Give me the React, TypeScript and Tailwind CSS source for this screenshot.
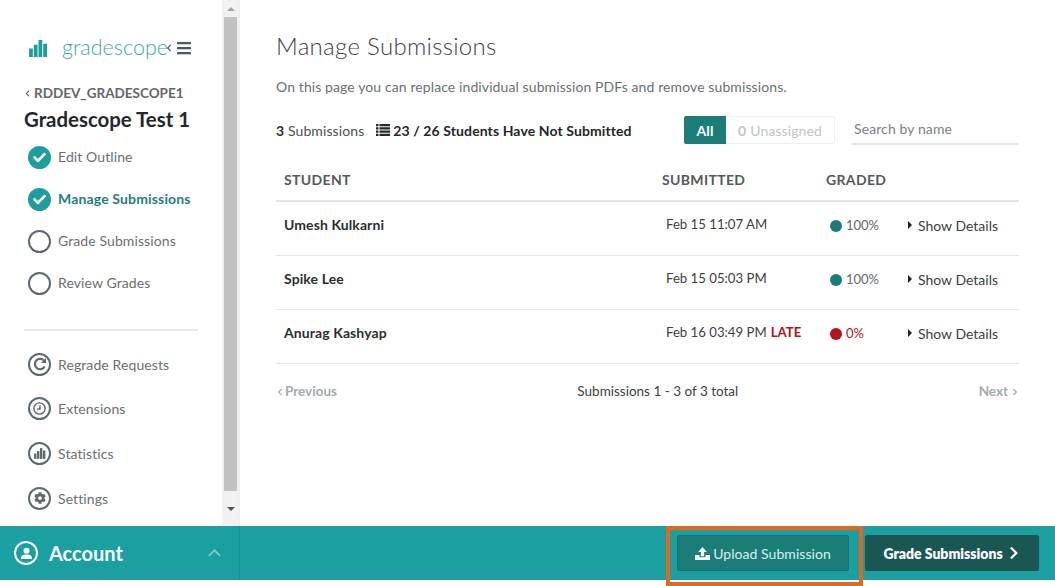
import React from "react";
import { FaBars, FaCheck, FaChevronRight, FaCog, FaChevronLeft } from "react-icons/fa";

const font = "font-['Lato','Open_Sans',sans-serif]";

const BarsIcon = ({ className }: { className: string }) => (
  <svg viewBox="0 0 20 18" className={className} fill="currentColor">
    <rect x="0" y="9" width="4" height="9" />
    <rect x="5" y="5" width="4" height="13" />
    <rect x="10" y="0" width="4" height="18" />
    <rect x="15" y="4" width="4" height="14" />
  </svg>
);

const ListIcon = () => (
  <svg viewBox="0 0 14 12" className="ml-3 w-[14px] h-[12px] text-[#22282c]" fill="currentColor">
    <path d="M0 0h2.5v2.2H0zM3.5 0H14v2.2H3.5zM0 3.3h2.5v2.2H0zM3.5 3.3H14v2.2H3.5zM0 6.6h2.5v2.2H0zM3.5 6.6H14v2.2H3.5zM0 9.8h2.5V12H0zM3.5 9.8H14V12H3.5z" />
  </svg>
);

const Step = ({ label, done, active }: { label: string; done?: boolean; active?: boolean }) => (
  <div className="flex items-center h-[42px]">
    {done ? (
      <span className="w-[23px] h-[23px] rounded-full bg-[#1c9e9e] flex items-center justify-center text-white">
        <FaCheck className="text-[13px]" />
      </span>
    ) : (
      <span className="w-[23px] h-[23px] rounded-full border-2 border-[#5a6a70]" />
    )}
    <span className={active ? "ml-[7px] -mt-[2px] text-[14px] tracking-[0.15px] font-bold text-[#1f7f7c]" : "ml-[7px] -mt-[2px] text-[14px] tracking-[0.1px] text-[#6b6f72]"}>
      {label}
    </span>
  </div>
);

const ToolLink = ({ label, icon }: { label: string; icon: React.ReactNode }) => (
  <div className="flex items-center h-[44.6px]">
    <span className="w-[23px] h-[23px] rounded-full border-2 border-[#5a6a70] flex items-center justify-center text-[#5a6a70]">
      {icon}
    </span>
    <span className="ml-[7px] text-[14px] tracking-[0.1px] text-[#6b6f72]">{label}</span>
  </div>
);

const Row = ({ name, when, late, pct, red }: { name: string; when: string; late?: boolean; pct: string; red?: boolean }) => (
  <div className="grid grid-cols-[378px_164px_82px_1fr] items-center h-[54px] pb-[7px] border-b border-[#e4e5ea] text-[14px] pl-2">
    <span className="font-bold text-[#2b2e30] -mt-[2px] tracking-[0.1px]">{name}</span>
    <span className="pl-1 text-[13.2px] text-[#3c3f41] whitespace-nowrap">
      {when}
      {late && <span className="ml-1 font-bold text-[#b5121b]">LATE</span>}
    </span>
    <span className={red ? "pl-1 mt-[2px] flex items-center text-[13px] text-[#b5121b]" : "pl-1 mt-[2px] flex items-center text-[13px] text-[#5f6a6c]"}>
      <span className={red ? "w-3 h-3 rounded-full bg-[#b5121b] mr-1" : "w-3 h-3 rounded-full bg-[#1b7d78] mr-1"} />
      {pct}
    </span>
    <span className="flex items-center text-[#3c3f41]">
      <span className="w-0 h-0 border-y-[4px] border-y-transparent border-l-[4px] border-l-[#222] mr-[6px]" />
      Show Details
    </span>
  </div>
);

export default function App() {
  return (
    <div className={`relative w-[1055px] h-[586px] overflow-hidden bg-white ${font}`}>
      <div className="flex h-[526px]">
        <aside className="flex w-[240px] shrink-0 border-r border-[#eeeeee]">
          <div className="w-[222px] pl-6 overflow-hidden">
            <div className="flex items-center h-[20px] mt-[38px] pl-[5px] text-[#1c9e9e]">
              <BarsIcon className="w-[19px] h-[17px]" />
              <span className="ml-[14px] text-[21.5px] font-light text-[#3aa8a8] leading-none">gradescope</span>
              <FaChevronLeft className="-ml-[3px] text-[#4a5a60] text-[8px]" />
              <FaBars className="ml-[3px] text-[#4a5a60] text-[16px]" />
            </div>
            <div className="flex items-center mt-[26px] text-[13.5px] font-bold text-[#62676a] leading-[18px]">
              <FaChevronLeft className="text-[7px] mr-[3px]" />
              RDDEV_GRADESCOPE1
            </div>
            <div className="mt-[5px] text-[20.4px] font-bold text-[#22282c] leading-[24px] whitespace-nowrap">Gradescope Test 1</div>
            <div className="mt-[5px] pl-1">
              <Step label="Edit Outline" done />
              <Step label="Manage Submissions" done active />
              <Step label="Grade Submissions" />
              <Step label="Review Grades" />
            </div>
            <div className="mt-[25px] w-[174px] h-[2px] bg-[#e3e7e7]" />
            <div className="mt-[11px] pl-1">
              <ToolLink
                label="Regrade Requests"
                icon={
                  <svg viewBox="0 0 16 16" className="w-[16px] h-[16px]" fill="none" stroke="currentColor" strokeWidth="2.2">
                    <path d="M12.7 10.5A5.2 5.2 0 1 1 12 4.6" />
                    <path d="M14 2v5H9z" fill="currentColor" stroke="none" />
                  </svg>
                }
              />
              <ToolLink
                label="Extensions"
                icon={
                  <svg viewBox="0 0 16 16" className="w-[15px] h-[15px]" fill="none" stroke="currentColor" strokeWidth="1.5">
                    <circle cx="8" cy="8" r="6" />
                    <path d="M8.5 4.5v4H5.5" />
                  </svg>
                }
              />
              <ToolLink label="Statistics" icon={<BarsIcon className="w-[12px] h-[11px]" />} />
              <ToolLink label="Settings" icon={<FaCog className="text-[12px]" />} />
            </div>
          </div>
          <div className="w-[17px] bg-[#f1f1f1] flex flex-col items-center">
            <div className="h-[17px] flex items-center justify-center">
              <span className="w-0 h-0 border-x-[4px] border-x-transparent border-b-[4px] border-b-[#a3a3a3]" />
            </div>
            <div className="w-[13px] h-[474px] bg-[#c1c1c1]" />
            <div className="flex-1 flex items-center justify-center">
              <span className="w-0 h-0 border-x-[4px] border-x-transparent border-t-[4px] border-t-[#505050]" />
            </div>
          </div>
        </aside>
        <main className="flex-1 pl-9 pr-9">
          <h1 className="mt-[32px] text-[24px] font-light text-[#3d4245] leading-[28px] tracking-[0.3px]">Manage Submissions</h1>
          <p className="mt-[18px] text-[14px] tracking-[0.1px] text-[#6b6f72] leading-[18px]">
            On this page you can replace individual submission PDFs and remove submissions.
          </p>
          <div className="flex items-center mt-[20px] h-[28px] text-[14px] tracking-[0.1px]">
            <span className="text-[#4a4f52]">
              <b className="text-[#2b2e30]">3</b> Submissions
            </span>
            <ListIcon />
            <b className="ml-[3px] text-[#22282c]">23 / 26 Students Have Not Submitted</b>
            <div className="ml-auto flex items-center">
              <div className="flex h-[28px] w-[151px] rounded-[2px] border border-[#eef0f0]">
                <span className="-ml-px -my-px w-[42px] flex items-center justify-center rounded-l-[2px] bg-[#1b7d78] text-white font-bold">All</span>
                <span className="flex-1 flex items-center justify-center text-[#c0c4c6]">
                  <b className="mr-1">0</b> Unassigned
                </span>
              </div>
              <div className="ml-[17px] w-[167px] h-[29px] border-b-2 border-[#e3e7e7] pt-[2px] pl-[2px] text-[#7a7f82]">Search by name</div>
            </div>
          </div>
          <div className="grid grid-cols-[378px_164px_1fr] mt-[25px] h-[33px] border-b-2 border-[#e4e5ea] pl-2 text-[14px] font-bold tracking-[0.35px] text-[#55595c]">
            <span>STUDENT</span>
            <span>SUBMITTED</span>
            <span>GRADED</span>
          </div>
          <Row name="Umesh Kulkarni" when="Feb 15 11:07 AM" pct="100%" />
          <Row name="Spike Lee" when="Feb 15 05:03 PM" pct="100%" />
          <Row name="Anurag Kashyap" when="Feb 16 03:49 PM" late pct="0%" red />
          <div className="flex items-center justify-between h-[55px] text-[13.5px]">
            <span className="flex items-center font-bold text-[#a4abae]">
              <FaChevronLeft className="text-[8px] mr-[1px]" />
              Previous
            </span>
            <span className="text-[#3c3f41]">Submissions 1 - 3 of 3 total</span>
            <span className="flex items-center font-bold text-[#a4abae]">
              Next
              <FaChevronRight className="text-[8px] ml-[3px]" />
            </span>
          </div>
        </main>
      </div>
      <footer className="flex items-center h-[54px] bg-[#1c9fa0]">
        <div className="flex items-center w-[240px] h-full pl-[14px] border-r border-[#188f90] text-white">
          <span className="w-[24px] h-[24px] rounded-full border-2 border-white flex items-center justify-center">
            <svg viewBox="0 0 14 14" className="w-[13px] h-[13px]" fill="currentColor">
              <circle cx="7" cy="4" r="3.2" />
              <path d="M1 13c0-4 2-5 6-5s6 1 6 5z" />
            </svg>
          </span>
          <span className="ml-[11px] text-[20px] font-bold">Account</span>
          <svg viewBox="0 0 14 8" className="ml-[85px] w-[13px] h-[8px]" fill="none" stroke="#7fcaca" strokeWidth="2">
            <path d="M1 7l6-6 6 6" />
          </svg>
        </div>
        <button className="ml-[437px] w-[172px] h-[36px] rounded-[2px] border border-[#177570] bg-[#1b7d78] text-[#d8f0ee] text-[14px] tracking-[0.05px] flex items-center justify-center">
          <svg viewBox="0 0 14 12" className="w-[15px] h-[13px] mr-[3px]" fill="#fff">
            <path d="M7 0l4 4.5H8.5v4h-3v-4H3zM0 7.5h4.2v2h5.6v-2H14V12H0z" />
          </svg>
          Upload Submission
        </button>
        <button className="ml-4 w-[174px] h-[36px] rounded-[2px] bg-[#1a5752] text-white text-[14px] font-extrabold flex items-center justify-center">
          Grade Submissions
          <FaChevronRight className="ml-1 text-[14px]" />
        </button>
      </footer>
      {/* annotation box */}
      <div className="absolute left-[666px] top-[526px] w-[197px] h-[60px] border-4 border-[#dd6a1f]" />
    </div>
  );
}
